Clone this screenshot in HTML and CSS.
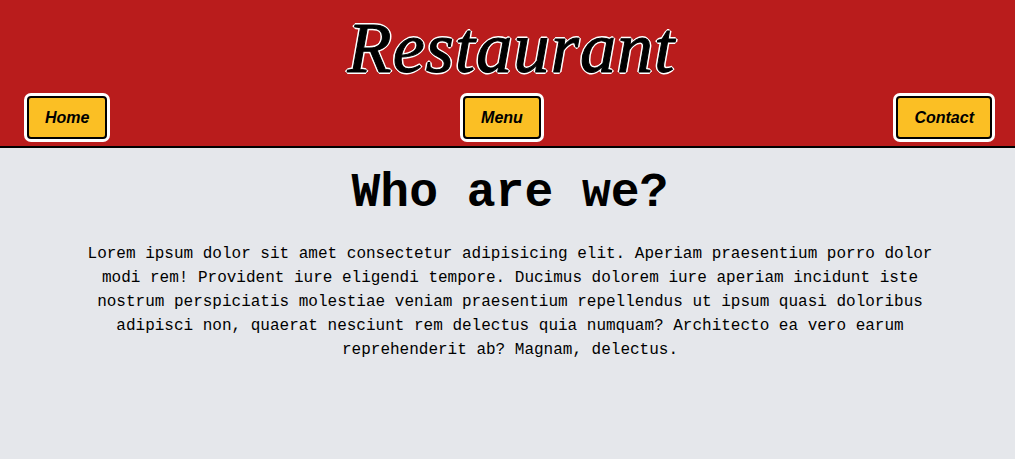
FILE: index.html
```html
<!DOCTYPE html>
<html lang="en">
<head>
<meta charset="utf-8">
<title>Restaurant</title>
<link rel="stylesheet" href="styles.css">
</head>
<body>
<header class="site-header">
  <h1 class="brand">Restaurant</h1>
  <nav class="nav">
    <a class="nav-btn" href="#">Home</a>
    <a class="nav-btn" href="#">Menu</a>
    <a class="nav-btn" href="#">Contact</a>
  </nav>
</header>
<main class="about">
  <h2 class="about-title">Who are we?</h2>
  <p class="about-text">Lorem ipsum dolor sit amet consectetur adipisicing elit. Aperiam praesentium porro dolor modi rem! Provident iure eligendi tempore. Ducimus dolorem iure aperiam incidunt iste nostrum perspiciatis molestiae veniam praesentium repellendus ut ipsum quasi doloribus adipisci non, quaerat nesciunt rem delectus quia numquam? Architecto ea vero earum reprehenderit ab? Magnam, delectus.</p>
</main>
</body>
</html>
```

FILE: styles.css
```css
html, body {
  margin: 0;
  padding: 0;
}
body {
  background: #e5e7eb;
  min-height: 459px;
  font-family: "Liberation Mono", monospace;
  color: #000;
}
.site-header {
  background: #b91c1c;
  border-bottom: 2px solid #000;
  padding: 8px 23px 7px 27px;
}
.brand {
  margin: 0 0 0 4px;
  text-align: center;
  font-family: "Liberation Serif", serif;
  font-style: italic;
  font-weight: normal;
  font-size: 72px;
  line-height: 80px;
  letter-spacing: 1.2px;
  color: #000;
  -webkit-text-stroke: 1px #000;
  text-shadow: 1px 1px 0 #fff, -1px -1px 0 #fff, 1px -1px 0 #fff, -1px 1px 0 #fff,
    2px 0 0 #fff, -2px 0 0 #fff, 0 2px 0 #fff, 0 -2px 0 #fff;
}
.nav {
  display: flex;
  justify-content: space-between;
  align-items: center;
  margin-top: 8px;
}
.nav-btn {
  display: block;
  background: #fbbf24;
  border: 2px solid #000;
  border-radius: 4px;
  box-shadow: 0 0 0 3px #fff;
  padding: 10px 16px;
  font-family: "Liberation Sans", Arial, sans-serif;
  font-style: italic;
  font-weight: bold;
  font-size: 16px;
  line-height: 19px;
  color: #000;
  text-decoration: none;
}
.about {
  padding: 0 80px 0 85px;
  text-align: center;
}
.about-title {
  margin: 0;
  padding-top: 17px;
  font-size: 48px;
  line-height: 56px;
  font-weight: bold;
}
.about-text {
  margin: 21px 0 0;
  font-size: 16px;
  line-height: 24px;
}
```
